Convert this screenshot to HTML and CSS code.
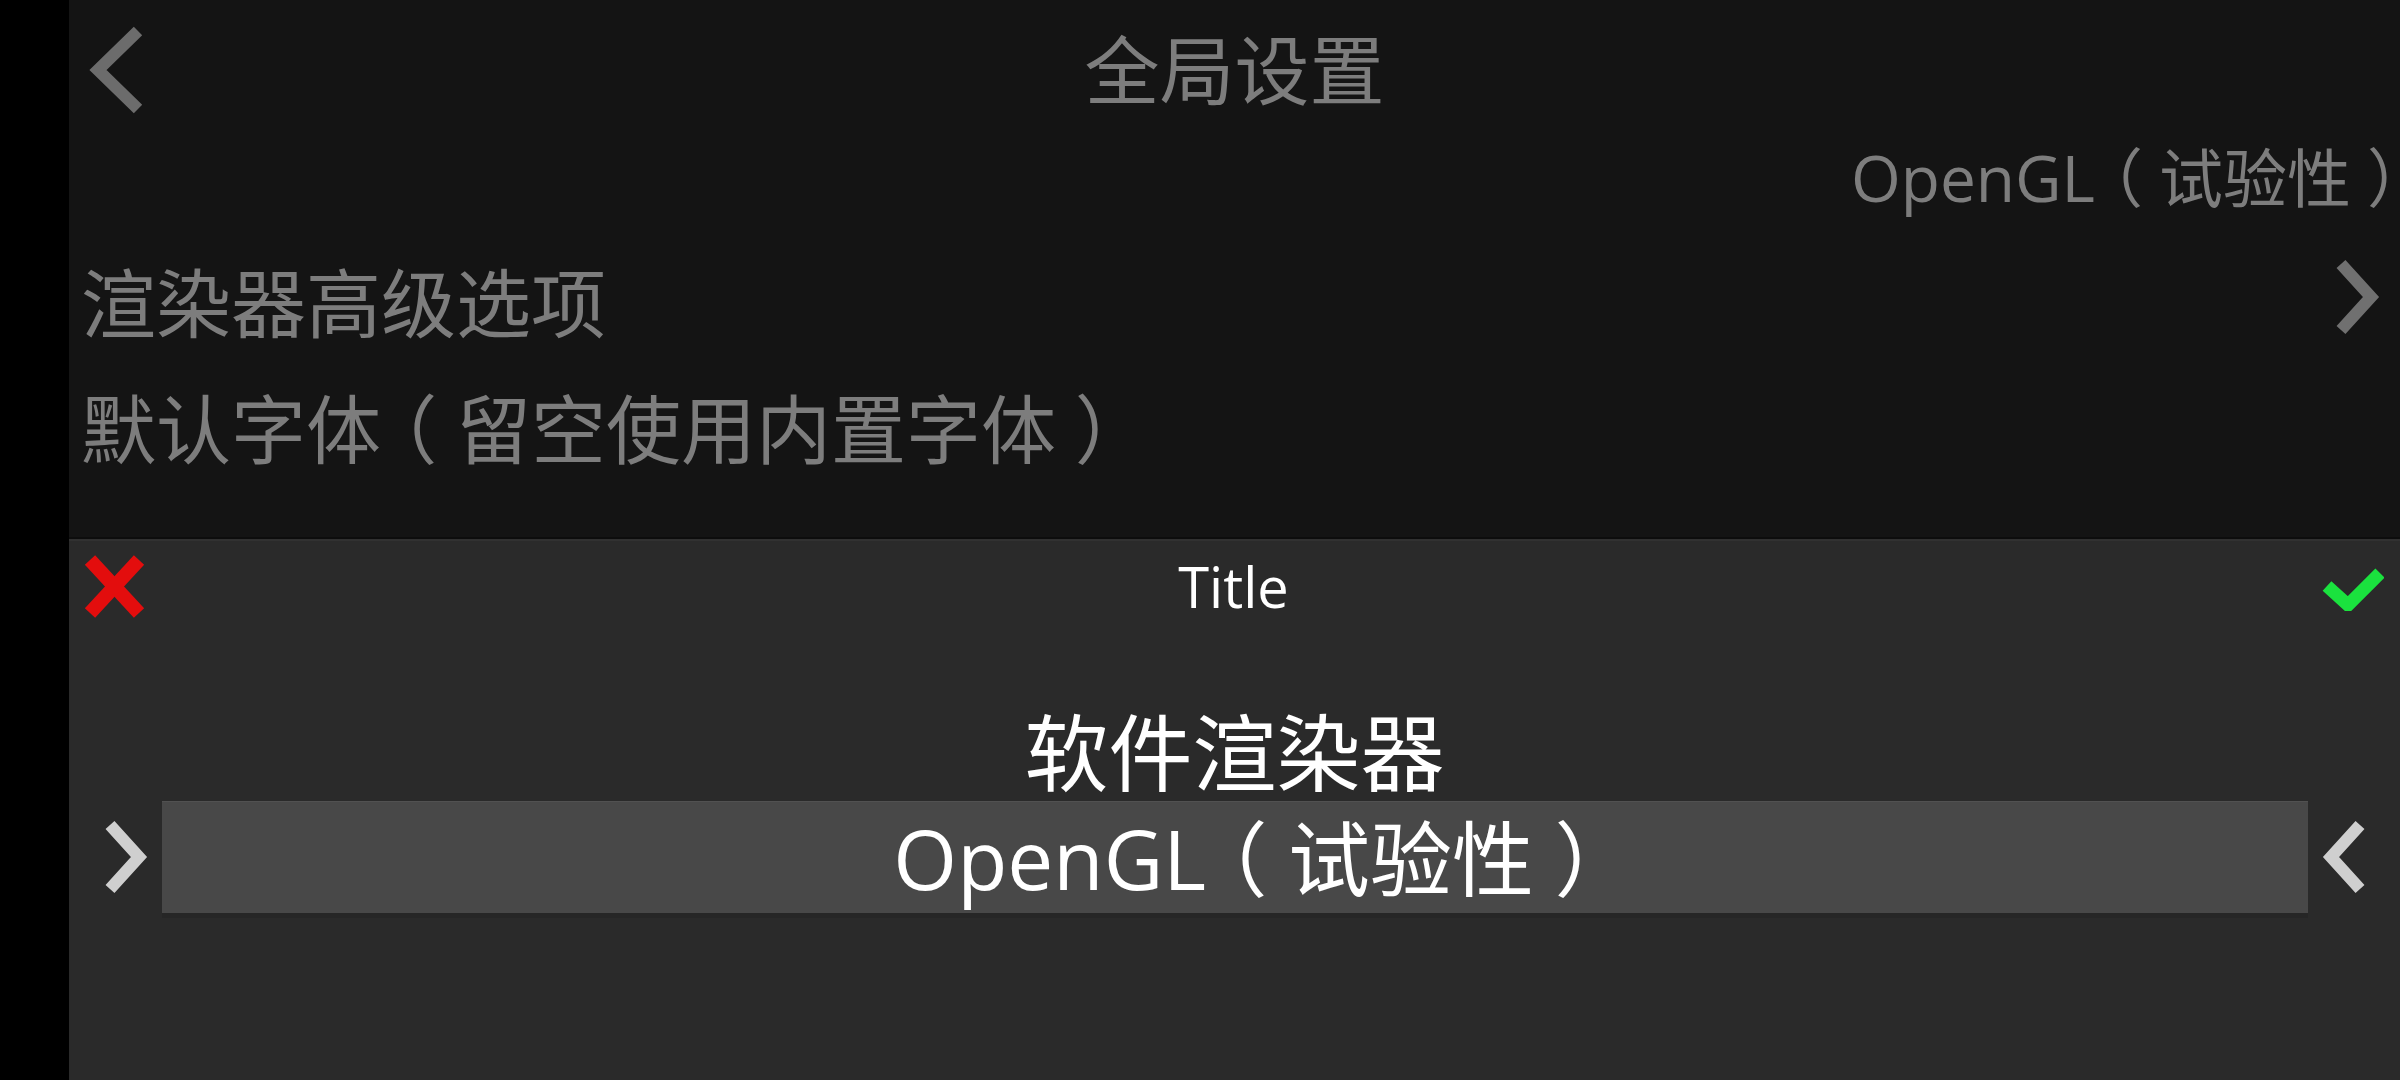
FILE: index.html
```html
<!DOCTYPE html>
<html lang="zh-CN">
<head>
<meta charset="utf-8">
<title>全局设置</title>
<link rel="stylesheet" href="styles.css">
</head>
<body>
<div class="app">
  <div class="gutter"></div>
  <main class="screen">
    <section class="settings">
      <header class="topbar">
        <div class="back">
          <svg class="back-icon" viewBox="0 0 60 90" width="60" height="90">
            <polyline points="50,6 10,45 50,84" fill="none" stroke="#6c6c6c" stroke-width="12" stroke-linecap="butt" stroke-linejoin="miter"/>
          </svg>
        </div>
        <h1 class="page-title">全局设置</h1>
        <div></div>
      </header>
      <div class="row row-value"><span class="value">OpenGL<span class="po">（</span>试验性<span class="pc">）</span></span></div>
      <div class="row"><span class="label">渲染器高级选项</span>
        <svg class="row-chev" viewBox="0 0 48 78" width="48" height="78">
          <polyline points="7,6 37,39 7,72" fill="none" stroke="#707070" stroke-width="12" stroke-linecap="butt" stroke-linejoin="miter"/>
        </svg>
      </div>
      <div class="row"><span class="label">默认字体<span class="po">（</span>留空使用内置字体<span class="pc">）</span></span></div>
    </section>
    <section class="dialog">
      <div class="dialog-bar">
        <svg class="icon-x" viewBox="0 0 61 65" width="61" height="65">
          <line x1="6" y1="6" x2="55" y2="59" stroke="#e30d0d" stroke-width="14"/>
          <line x1="55" y1="6" x2="6" y2="59" stroke="#e30d0d" stroke-width="14"/>
        </svg>
        <span class="dialog-title">Title</span>
        <svg class="icon-check" viewBox="0 0 62 43" width="62" height="43">
          <polyline points="5,18 26,37 58,5" fill="none" stroke="#1ae23e" stroke-width="13" stroke-linecap="butt" stroke-linejoin="miter"/>
        </svg>
      </div>
      <div class="picker">
        <div class="item">软件渲染器</div>
        <div class="selected-row">
          <svg class="pick-chev" viewBox="0 0 46 76" width="46" height="76">
            <polyline points="6,6 35,38 6,70" fill="none" stroke="#cfcfcf" stroke-width="12" stroke-linecap="butt" stroke-linejoin="miter"/>
          </svg>
          <div class="item selected"><span class="sel-text">OpenGL<span class="po">（</span>试验性<span class="pc">）</span></span></div>
          <svg class="pick-chev" viewBox="0 0 46 76" width="46" height="76">
            <polyline points="40,6 11,38 40,70" fill="none" stroke="#cfcfcf" stroke-width="12" stroke-linecap="butt" stroke-linejoin="miter"/>
          </svg>
        </div>
      </div>
    </section>
  </main>
</div>
</body>
</html>
```
FILE: styles.css
```css
html, body {
  margin: 0;
  padding: 0;
  background: #000;
  width: 2400px;
  height: 1080px;
  overflow: hidden;
}

.app {
  display: flex;
  width: 2400px;
  height: 1080px;
  font-family: "Open Sans", "Noto Sans CJK SC", sans-serif;
}

.gutter {
  width: 69px;
  flex: none;
  background: #000;
}

.screen {
  flex: 1;
  display: flex;
  flex-direction: column;
  min-width: 0;
}

.settings {
  height: 537px;
  flex: none;
  background: #141414;
  color: #7d7d7d;
  display: flex;
  flex-direction: column;
}

.topbar {
  height: 140px;
  display: grid;
  grid-template-columns: 1fr auto 1fr;
  align-items: center;
}

.back {
  padding-left: 19px;
  display: flex;
  align-items: center;
}

.back-icon {
  display: block;
}

.page-title {
  margin: 0;
  font-weight: 400;
  font-size: 75px;
  line-height: 1;
  color: #7d7d7d;
}

.po,
.pc {
  font-feature-settings: "halt" 1;
}

.po {
  padding-left: 0.25em;
  padding-right: 0.25em;
}

.pc {
  padding-left: 0.25em;
  padding-right: 0;
}

.row {
  display: flex;
  align-items: center;
  justify-content: space-between;
  height: 126px;
  padding: 0 18px 0 12px;
}

.row-value {
  height: 76px;
  justify-content: flex-end;
  padding-right: 1px;
  margin-bottom: 24px;
}

.value {
  font-size: 64px;
  line-height: 1;
  white-space: nowrap;
}

.label {
  font-size: 75px;
  line-height: 1;
  white-space: nowrap;
}

.row-chev {
  display: block;
  margin-top: -12px;
}

.dialog {
  flex: 1;
  background: #2a2a2a;
  border-top: 2px solid #0d0d0d;
  box-shadow: inset 0 2px 0 #313131;
  color: #fff;
  display: flex;
  flex-direction: column;
}

.dialog-bar {
  height: 94px;
  display: flex;
  align-items: center;
  justify-content: space-between;
  padding: 0 16px 0 15px;
}

.icon-x {
  display: block;
}

.icon-check {
  display: block;
  margin-top: 6px;
}

.dialog-title {
  font-size: 56px;
  line-height: 1;
  color: #fff;
}

.picker {
  padding-top: 72px;
  display: flex;
  flex-direction: column;
}

.item {
  height: 96px;
  display: flex;
  align-items: center;
  justify-content: center;
  font-size: 84px;
  line-height: 1;
  white-space: nowrap;
  color: #fff;
}

.selected-row {
  display: flex;
  align-items: center;
  gap: 12px;
  padding: 0 34px 0 35px;
}

.pick-chev {
  display: block;
  flex: none;
}

.item.selected {
  flex: 1;
  height: 112px;
  background: #484848;
  border-top: 1px solid #515151;
  box-sizing: border-box;
  box-shadow: 0 5px 0 #262626;
  font-size: 82px;
}

.sel-text {
  padding-left: 19px;
}
```
